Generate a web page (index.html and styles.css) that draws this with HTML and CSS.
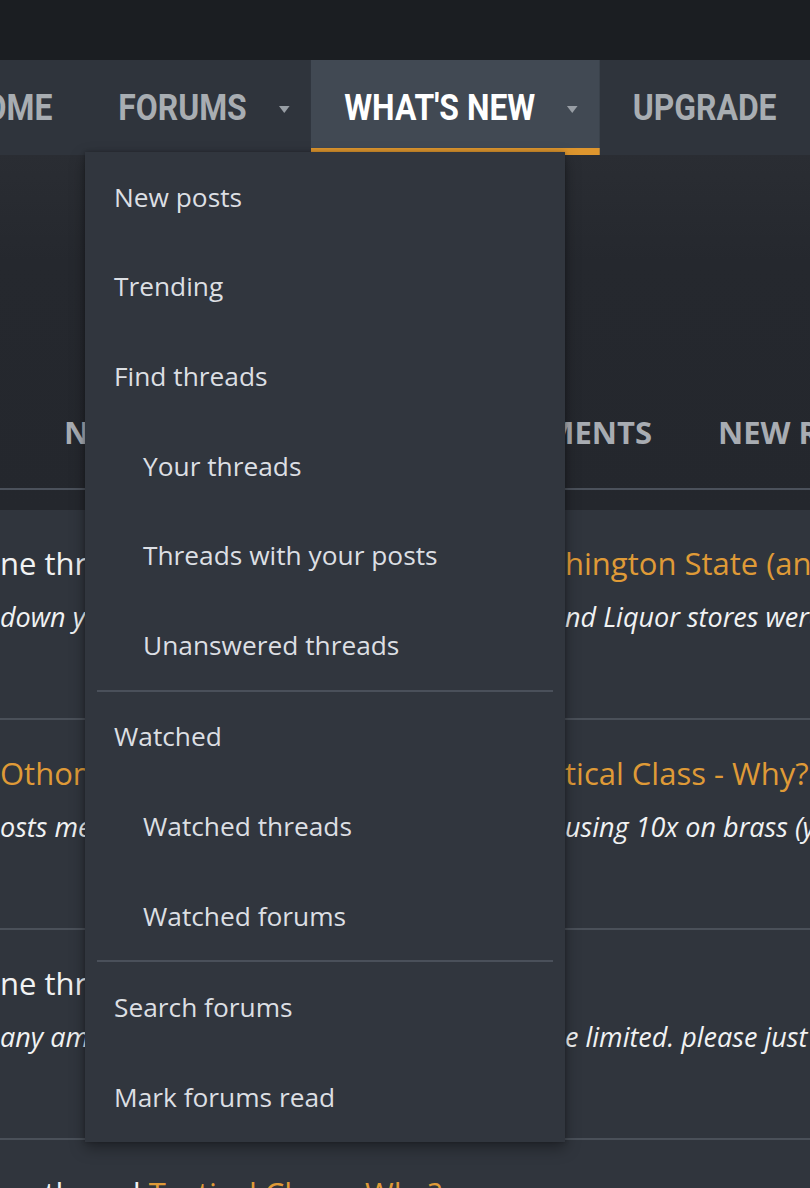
FILE: index.html
```html
<!DOCTYPE html>
<html lang="en">
<head>
<meta charset="utf-8">
<title>What's new</title>
<link rel="stylesheet" href="styles.css">
</head>
<body>
<div class="page">
  <header class="topbar"></header>
  <nav class="nav">
    <div class="nav-track">
      <a class="nav-item">HOME</a>
      <a class="nav-item has-menu">FORUMS<span class="caret"></span></a>
      <a class="nav-item has-menu active">WHAT'S NEW<span class="caret"></span></a>
      <a class="nav-item">UPGRADE</a>
    </div>
  </nav>

  <section class="subhead">
    <div class="tabs">
      <div class="tabs-left">
        <span class="tab">NEW POSTS</span>
        <span class="tab">NEW COMMENTS</span>
      </div>
      <span class="tab tab-gap">NEW RESOURCES</span>
    </div>
    <div class="tabs-line"></div>
  </section>

  <main class="feed">
    <article class="row">
      <div class="title"><span class="cut">ne thread <span class="link">Gun shows in Was</span></span><span class="link">hington State (and more)</span></div>
      <div class="snippet"><span class="cut">down yesterday. Gun shops a</span><span>nd Liquor stores were open</span></div>
    </article>
    <article class="row">
      <div class="title"><span class="cut link">Othomas replied to Tac</span><span class="link">tical Class - Why?</span></div>
      <div class="snippet"><span class="cut">osts mentioned that they are </span><span>using 10x on brass (yes)</span></div>
    </article>
    <article class="row">
      <div class="title"><span class="cut">ne thread <span class="link">Ammo</span></span></div>
      <div class="snippet"><span class="cut">any ammo because supplies ar</span><span>e limited. please just</span></div>
    </article>
    <article class="row">
      <div class="title"><span>ne thread&nbsp;</span><span class="link">Tactical Class - Why?</span></div>
    </article>
  </main>

  <div class="menu">
    <a class="menu-item">New posts</a>
    <a class="menu-item">Trending</a>
    <a class="menu-item">Find threads</a>
    <a class="menu-item sub">Your threads</a>
    <a class="menu-item sub">Threads with your posts</a>
    <a class="menu-item sub">Unanswered threads</a>
    <div class="menu-sep"></div>
    <a class="menu-item">Watched</a>
    <a class="menu-item sub">Watched threads</a>
    <a class="menu-item sub">Watched forums</a>
    <div class="menu-sep"></div>
    <a class="menu-item">Search forums</a>
    <a class="menu-item">Mark forums read</a>
  </div>
</div>
</body>
</html>
```

FILE: styles.css
```css
html, body {
  margin: 0;
  padding: 0;
  background: #30353d;
}
body {
  width: 810px;
  height: 1188px;
  overflow: hidden;
  font-family: "Open Sans", "Noto Sans", sans-serif;
}
.page {
  position: relative;
  width: 810px;
  height: 1188px;
  overflow: hidden;
}
.topbar {
  height: 60px;
  background: #1b1e22;
}
.nav {
  height: 95px;
  background: #2f343c;
  overflow: hidden;
}
/* condensed face emulated by horizontal scale of the whole bar */
.nav-track {
  display: flex;
  height: 95px;
  margin-left: -71px;
  white-space: nowrap;
  transform: scaleX(0.886);
  transform-origin: left center;
}
.nav-item {
  display: flex;
  align-items: center;
  height: 95px;
  padding: 0 37.2px;
  font-family: "Roboto", "Liberation Sans", sans-serif;
  font-weight: 700;
  font-size: 36px;
  color: #a8adb2;
  box-sizing: border-box;
  flex: none;
}
.nav-item.has-menu {
  padding-right: 24.8px;
}
.nav-item.active {
  background: #414953;
  color: #ffffff;
  box-shadow: inset 0 -7px 0 #de962e;
}
.caret {
  display: inline-block;
  width: 0;
  height: 0;
  margin-left: 36px;
  margin-top: 4px;
  border-left: 6.8px solid transparent;
  border-right: 6.8px solid transparent;
  border-top: 7px solid #989ea5;
}
.subhead {
  height: 355px;
  background: linear-gradient(180deg, #2a2d33 0%, #25282e 30%, #24272d 100%);
  display: flex;
  flex-direction: column;
  justify-content: flex-end;
}
.tabs {
  display: flex;
  white-space: nowrap;
  align-items: center;
  height: 60px;
  margin-bottom: 26px;
}
.tabs-left {
  width: 652px;
  flex: none;
  display: flex;
  justify-content: space-between;
  padding-left: 64px;
  box-sizing: border-box;
}
.tab {
  font-family: "Open Sans", sans-serif;
  font-weight: 700;
  font-size: 31px;
  color: #a8acb2;
}
.tab-gap {
  margin-left: 66px;
}
.tabs-line {
  height: 2px;
  background: #4b515b;
  margin-bottom: 20px;
}
.feed {
  background: #30353d;
}
.row {
  height: 177px;
  border-bottom: 2px solid #4a5059;
  padding-top: 31px;
  overflow: hidden;
  white-space: nowrap;
}
.title {
  font-size: 31px;
  line-height: 44px;
  color: #f1f2f3;
  display: flex;
}
.snippet {
  font-size: 27px;
  line-height: 40px;
  margin-top: 12px;
  font-style: italic;
  color: #f1f2f3;
  display: flex;
}
.cut {
  display: inline-block;
  width: 565px;
  flex: none;
  overflow: hidden;
}
.link {
  color: #df9a37;
}
.menu {
  position: absolute;
  left: 85px;
  top: 152px;
  width: 480px;
  background: #31363e;
  box-shadow: 0 6px 14px rgba(0, 0, 0, 0.35), 0 0 4px rgba(0, 0, 0, 0.25);
  display: flex;
  flex-direction: column;
}
.menu-item {
  display: flex;
  align-items: center;
  height: 89.6px;
  padding-left: 29px;
  font-size: 26.3px;
  color: #dcdfe3;
}
.menu-item.sub {
  padding-left: 58px;
}
.menu-sep {
  height: 2px;
  margin: 0 12px;
  background: #4a505a;
}
```
